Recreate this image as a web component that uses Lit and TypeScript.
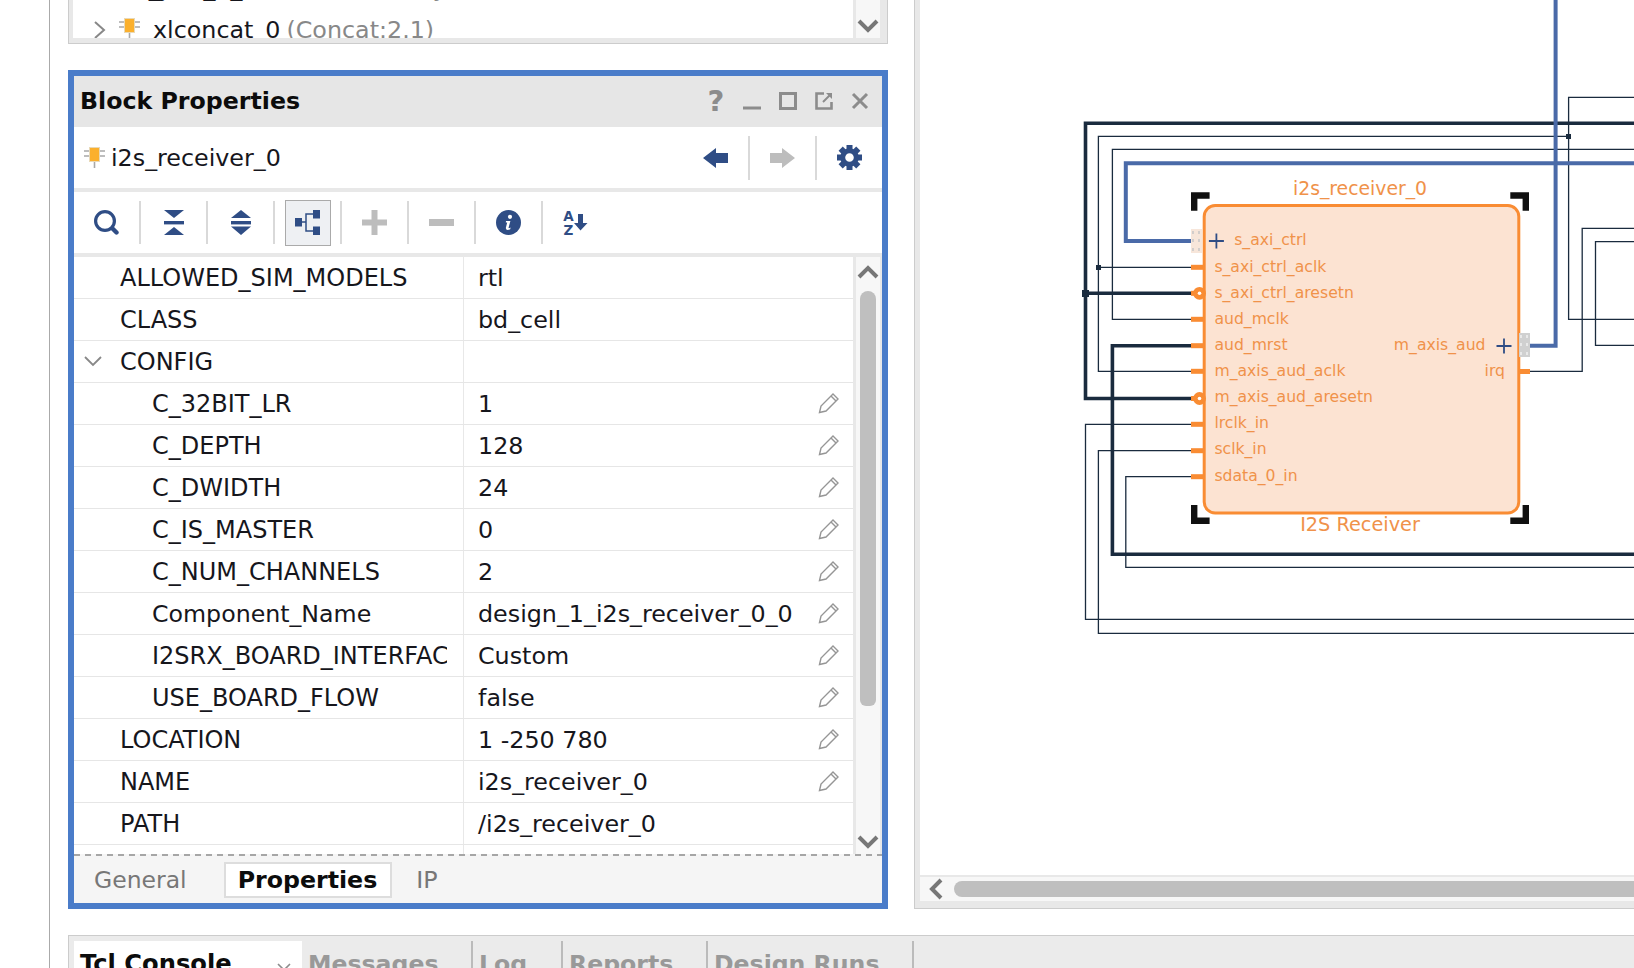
import { LitElement, html, svg, css } from "lit"
import { customElement } from "lit/decorators.js"

const NAVY = "#2f4d85"
const GREY = "#bdbdbd"

type Row = { name: string; value: string; child?: boolean; open?: boolean; edit?: boolean }

const rows: Row[] = [
    { name: "ALLOWED_SIM_MODELS", value: "rtl" },
    { name: "CLASS", value: "bd_cell" },
    { name: "CONFIG", value: "", open: true },
    { name: "C_32BIT_LR", value: "1", child: true, edit: true },
    { name: "C_DEPTH", value: "128", child: true, edit: true },
    { name: "C_DWIDTH", value: "24", child: true, edit: true },
    { name: "C_IS_MASTER", value: "0", child: true, edit: true },
    { name: "C_NUM_CHANNELS", value: "2", child: true, edit: true },
    { name: "Component_Name", value: "design_1_i2s_receiver_0_0", child: true, edit: true },
    { name: "I2SRX_BOARD_INTERFACE", value: "Custom", child: true, edit: true },
    { name: "USE_BOARD_FLOW", value: "false", child: true, edit: true },
    { name: "LOCATION", value: "1 -250 780", edit: true },
    { name: "NAME", value: "i2s_receiver_0", edit: true },
    { name: "PATH", value: "/i2s_receiver_0" },
]

// wires on the block design, in page coordinates
const thinWires = [
    "1191,267.3 1098.4,267.3",
    "1568.6,136.3 1098.4,136.3 1098.4,371.3 1191,371.3",
    "1640,149.3 1112.4,149.3 1112.4,319.3 1191,319.3",
    "1640,97.3 1568.6,97.3 1568.6,319.3 1640,319.3",
    "1530,371.3 1582.2,371.3 1582.2,228.3 1640,228.3",
    "1640,241.7 1595.5,241.7 1595.5,345.3 1640,345.3",
    "1191,424.3 1085.5,424.3 1085.5,619.3 1640,619.3",
    "1191,450.7 1098.4,450.7 1098.4,633.3 1640,633.3",
    "1191,476.7 1125.8,476.7 1125.8,567.3 1640,567.3",
]
const darkWires = [
    "1640,123.3 1085.5,123.3 1085.5,398.5 1191,398.5",
    "1085.5,293.3 1191,293.3",
    "1191,345.7 1112.4,345.7 1112.4,554.3 1640,554.3",
]
const blueWires = [
    "1640,163.3 1125.8,163.3 1125.8,241 1191,241",
    "1555.6,0 1555.6,345.7 1530,345.7",
]

const leftPins = [
    { label: "s_axi_ctrl_aclk", y: 267.3, base: 272 },
    { label: "s_axi_ctrl_aresetn", y: 293.3, base: 298, bubble: true },
    { label: "aud_mclk", y: 319.3, base: 324 },
    { label: "aud_mrst", y: 345.7, base: 350 },
    { label: "m_axis_aud_aclk", y: 371.3, base: 375.5 },
    { label: "m_axis_aud_aresetn", y: 398.5, base: 402, bubble: true },
    { label: "lrclk_in", y: 424.3, base: 428.4 },
    { label: "sclk_in", y: 450.7, base: 454 },
    { label: "sdata_0_in", y: 476.7, base: 480.8 },
]

const chip = () => html`<svg class="chip" width="21" height="21" viewBox="0 0 21 21">
    <path d="M0 4H6M0 9H6M15 4H21M15 9H21M10.5 15V21" stroke="#a8a8a8" stroke-width="1.6" fill="none" />
    <rect x="5.5" y="0.5" width="10" height="14" fill="#fbb02d" stroke="#e8d9b8" />
</svg>`

const pencil = () => html`<svg class="pencil" width="22" height="22" viewBox="0 0 22 22" fill="none" stroke="#969696" stroke-width="1.4">
    <path d="M1.5 20.5L3 14L15 2L20 7L8 19Z" />
    <path d="M13 4L18 9" />
</svg>`

const chevron = (dir: "up" | "down") => html`<svg class="chev" width="22" height="14" viewBox="0 0 22 14">
    <path d=${dir === "up" ? "M2 12L11 3L20 12" : "M2 2L11 11L20 2"} fill="none" stroke="#777" stroke-width="4" />
</svg>`

const tools = [
    html`<svg width="25" height="25" viewBox="0 0 25 25" fill="none" stroke=${NAVY}>
        <circle cx="11" cy="11" r="9.4" stroke-width="3.2" />
        <path d="M18.5 18.5L22.5 22.5" stroke-width="4.4" stroke-linecap="round" />
    </svg>`,
    html`<svg width="20" height="25" viewBox="0 0 20 25" fill=${NAVY}>
        <path d="M0 0H20L10 8ZM10 17L20 25H0Z" /><rect y="11" width="20" height="3.4" />
    </svg>`,
    html`<svg width="20" height="25" viewBox="0 0 20 25" fill=${NAVY}>
        <path d="M10 0L20 8H0ZM0 16.5H20L10 25Z" /><rect y="11" width="20" height="3.4" />
    </svg>`,
    html`<svg width="25" height="25" viewBox="0 0 25 25" fill=${NAVY}>
        <rect y="8" width="7" height="8.5" /><rect x="18" width="7" height="8.5" /><rect x="18" y="16.5" width="7" height="8.5" />
        <path d="M7 12H11M18 4H11V21H18" fill="none" stroke=${NAVY} stroke-width="1.5" />
    </svg>`,
    html`<svg width="25" height="25" viewBox="0 0 25 25" fill=${GREY}>
        <rect y="9.5" width="25" height="6" /><rect x="9.5" width="6" height="25" />
    </svg>`,
    html`<svg width="25" height="25" viewBox="0 0 25 25" fill=${GREY}><rect y="9" width="25" height="7" /></svg>`,
    html`<svg width="25" height="25" viewBox="0 0 25 25">
        <circle cx="12.5" cy="12.5" r="12.5" fill=${NAVY} />
        <circle cx="14" cy="6.8" r="2.1" fill="#fff" />
        <path d="M10 11H14.4L12.6 17.6Q12.4 18.8 14.6 17.6L14.2 19.2Q10 21 9.8 18L11.2 12.6L9.8 12.4Z" fill="#fff" />
    </svg>`,
    html`<svg width="25" height="25" viewBox="0 0 25 25">
        <text x="5.5" y="10.5" text-anchor="middle" class="az">A</text>
        <text x="5.5" y="24.5" text-anchor="middle" class="az">Z</text>
        <path d="M15 4H20V13H24.5L17.5 20.5L11 13H15Z" fill=${NAVY} />
    </svg>`,
]

const gear = html`<svg width="25" height="25" viewBox="0 0 25 25">
    ${[0, 45, 90, 135, 180, 225, 270, 315].map(
        (a) => svg`<rect x="9.5" y="0" width="6" height="6" fill=${NAVY} transform="rotate(${a} 12.5 12.5)" />`
    )}
    <circle cx="12.5" cy="12.5" r="6.8" fill="none" stroke=${NAVY} stroke-width="5" />
</svg>`

const corner = (d: string) => svg`<path d=${d} fill="none" stroke="#101010" stroke-width="6.4" />`

const busPort = (x: number, y: number, fill: string, dot: string) => svg`
    <rect x=${x} y=${y} width="11" height="24" fill=${fill} />
    <path d="M${x + 2} ${y + 2}v3M${x + 8} ${y + 2}v3M${x + 2} ${y + 10}v3M${x + 8} ${y + 10}v3M${x + 2} ${y + 19}v3M${x + 8} ${y + 19}v3"
        stroke=${dot} stroke-width="1.6" />`

const plus = (x: number, y: number) =>
    svg`<path d="M${x - 7.5} ${y}H${x + 7.5}M${x} ${y - 7.5}V${y + 7.5}" stroke=${NAVY} stroke-width="1.8" />`

@customElement("app-root")
export class AppRoot extends LitElement {
    static styles = css`
        :host {
            display: block;
            width: 1634px;
            height: 968px;
            overflow: hidden;
            background: #fff;
            font-family: "DejaVu Sans", sans-serif;
            font-size: 23.8px;
            color: #16161c;
        }
        svg {
            display: block;
            flex: none;
        }
        .page {
            display: flex;
            height: 968px;
        }
        .strip {
            width: 49px;
            flex: none;
            border-right: 1px solid #aaa;
        }
        .content {
            flex: 1;
            min-width: 0;
            display: flex;
            flex-direction: column;
        }
        .upper {
            height: 935px;
            flex: none;
            display: flex;
            padding-left: 18px;
        }
        .left {
            width: 820px;
            flex: none;
            display: flex;
            flex-direction: column;
            gap: 26px;
        }

        /* design hierarchy tail */
        .tree {
            height: 44px;
            box-sizing: border-box;
            display: flex;
            background: #e8e8e8;
            border: 1px solid #ccc;
            border-top: none;
            padding: 0 7px 5px 4px;
        }
        .tree-rows {
            flex: 1;
            background: #fff;
            overflow: hidden;
            display: flex;
            flex-direction: column;
            justify-content: flex-end;
        }
        .tree-row {
            height: 42px;
            flex: none;
            display: flex;
            align-items: center;
            white-space: nowrap;
            padding-left: 48px;
            gap: 6px;
            margin-bottom: -13px;
        }
        .tree-row + .tree-row {
            margin-top: 13px;
        }
        .tree-row .chev-r {
            margin: 0 6px 0 -28px;
        }
        .tree-row .chip {
            margin: -4px 7px 0 0;
        }
        .ip {
            color: #888;
        }
        .tree-bar {
            width: 24px;
            background: #f7f7f7;
            margin-left: 3px;
            display: flex;
            justify-content: center;
            align-items: flex-end;
            padding-bottom: 5px;
        }

        /* block properties window */
        .block {
            height: 839px;
            box-sizing: border-box;
            border: 6px solid #4a7cc9;
            display: flex;
            flex-direction: column;
        }
        .title {
            height: 51px;
            flex: none;
            box-sizing: border-box;
            background: #e6e6e6;
            display: flex;
            align-items: center;
            padding: 0 0 2px 6px;
            font-weight: 700;
            color: #0c0c0c;
            font-size: 23.7px;
        }
        .win-icons {
            margin-left: auto;
            display: flex;
            align-items: center;
        }
        .win-icon {
            width: 36px;
            height: 26px;
            display: flex;
            align-items: center;
            justify-content: center;
            color: #8c8c8c;
        }
        .win-icon.q {
            font-size: 29px;
        }
        .win-icon.last {
            margin-right: 4px;
        }
        .sub {
            height: 61px;
            flex: none;
            display: flex;
            align-items: center;
            padding-left: 10px;
            gap: 6px;
            border-bottom: 4px solid #e8e8e8;
        }
        .sub-tools {
            margin-left: auto;
            display: flex;
            align-items: center;
            height: 44px;
        }
        .sub-cell {
            width: 65px;
            display: flex;
            justify-content: center;
        }
        .sep {
            width: 2px;
            align-self: stretch;
            background: #d9d9d9;
            flex: none;
        }
        .toolbar {
            height: 61px;
            flex: none;
            display: flex;
            align-items: center;
            border-bottom: 4px solid #e8e8e8;
        }
        .tool-row {
            display: flex;
            height: 43px;
            align-items: center;
        }
        .tool {
            width: 65px;
            height: 43px;
            display: flex;
            align-items: center;
            justify-content: center;
        }
        .tool.active {
            height: 46px;
            width: 46px;
            margin: 0 9.5px;
            box-sizing: border-box;
            background: #eef0f3;
            border: 1px solid #aaa;
        }
        .az {
            font: 700 13.5px "DejaVu Sans", sans-serif;
            fill: #2f4d85;
        }

        /* property table */
        .body {
            flex: 1;
            min-height: 0;
            display: flex;
            background: #f7f7f7;
        }
        .table {
            width: 779px;
            flex: none;
            background: #fff;
            overflow: hidden;
            border-right: 3px solid #e8e8e8;
        }
        .row {
            height: 42px;
            box-sizing: border-box;
            display: flex;
            border-bottom: 1px solid #e6e6e6;
            align-items: stretch;
        }
        .name {
            width: 373px;
            flex: none;
            box-sizing: border-box;
            padding-left: 46px;
            white-space: nowrap;
            overflow: hidden;
            display: flex;
            align-items: center;
            align-self: stretch;
        }
        .name.child {
            padding-left: 78px;
        }
        .name.caps {
            font-size: 24px;
        }
        .name.mixed {
            font-size: 23.7px;
        }
        .name-cell {
            width: 389px;
            flex: none;
            border-right: 1px solid #e8e8e8;
            display: flex;
            align-items: center;
            position: relative;
        }
        .open {
            position: absolute;
            left: 10px;
            top: 15px;
        }
        .value {
            flex: 1;
            min-width: 0;
            display: flex;
            align-items: center;
            padding-left: 14px;
            white-space: nowrap;
        }
        .pencil {
            margin: -2px 13px 0 auto;
        }
        .row.tail {
            height: 20px;
        }
        .tail .name-cell {
            height: 20px;
        }
        .vbar {
            width: 24px;
            flex: none;
            display: flex;
            flex-direction: column;
            align-items: center;
            padding: 8px 0 5px;
            box-sizing: border-box;
        }
        .thumb {
            width: 16px;
            height: 415px;
            background: #bfbfbf;
            border-radius: 8px 8px 6px 6px;
            margin-top: 12px;
        }
        .vbar .chev:last-child {
            margin-top: auto;
        }
        .band {
            width: 2px;
            flex: none;
            background: #e8e8e8;
        }
        .tabs {
            height: 49px;
            flex: none;
            box-sizing: border-box;
            background-color: #f5f5f5;
            background-image: repeating-linear-gradient(90deg, #a6a6a6 0 6px, transparent 6px 11px);
            background-size: 100% 2px;
            background-repeat: no-repeat;
            display: flex;
            align-items: center;
            padding: 2px 0 0 20px;
            color: #777;
        }
        .tabs .gen {
            font-size: 23.5px;
        }
        .tabs .on {
            margin: 0 24px 0 37px;
            padding: 0 13px 0 12px;
            height: 36px;
            display: flex;
            align-items: center;
            background: #fff;
            border: 2px solid #ddd;
            box-sizing: border-box;
            font-weight: 700;
            color: #0c0c0c;
            font-size: 23.7px;
        }

        /* block design */
        .design {
            flex: 1;
            min-width: 0;
            margin-left: 26px;
            height: 909px;
            box-sizing: border-box;
            background: #e8e8e8;
            border-left: 1px solid #ccc;
            border-bottom: 1px solid #ccc;
            padding: 0 0 7px 5px;
            display: flex;
            flex-direction: column;
        }
        .canvas {
            flex: 1;
            min-height: 0;
            background: #fff;
            overflow: hidden;
        }
        .hbar {
            height: 24px;
            flex: none;
            margin-top: 2px;
            background: #f7f7f7;
            display: flex;
            align-items: center;
            padding-left: 8px;
            gap: 10px;
        }
        .hthumb {
            flex: 1;
            height: 16px;
            background: #bfbfbf;
            border-radius: 8px 0 0 8px;
            margin-right: -10px;
        }
        .pin-label {
            font: 15.65px "DejaVu Sans", sans-serif;
            fill: #f0924a;
        }
        .cell-label {
            font: 18.8px "DejaVu Sans", sans-serif;
            fill: #f0924a;
        }
        .type-label {
            font: 19.3px "DejaVu Sans", sans-serif;
            fill: #f0924a;
        }

        /* console tabs, cut off by the window */
        .bottom {
            flex: 1;
            min-height: 0;
            margin-left: 18px;
            background: #ebebeb;
            border-top: 1px solid #ccc;
            border-left: 1px solid #ccc;
            padding: 5px 0 0 5px;
            display: flex;
            overflow: hidden;
            font-weight: 700;
            font-size: 23.6px;
            color: #999;
        }
        .ctab {
            height: 40px;
            flex: none;
            box-sizing: border-box;
            padding: 9px 0 0 6px;
            border-right: 2px solid #bbb;
            white-space: nowrap;
        }
        .ctab.on {
            background: #fff;
            color: #0c0c0c;
            border-right: none;
            width: 228px;
            display: flex;
            font-size: 24.2px;
        }
        .ctab.on svg {
            margin: 13px 11px 0 auto;
        }
        .ctab.messages {
            width: 171px;
        }
        .ctab.log {
            width: 90px;
        }
        .ctab.reports {
            width: 145px;
        }
        .ctab.runs {
            width: 206px;
        }
    `

    render() {
        return html`
            <div class="page">
                <div class="strip"></div>
                <div class="content">
                    <div class="upper">
                        <div class="left">
                            ${this.renderTree()} ${this.renderBlock()}
                        </div>
                        ${this.renderDesign()}
                    </div>
                    <div class="bottom">
                        <div class="ctab on">
                            Tcl Console
                            <svg width="14" height="14" viewBox="0 0 14 14">
                                <path d="M1 1L13 13M13 1L1 13" stroke="#8c8c8c" stroke-width="1.6" />
                            </svg>
                        </div>
                        <div class="ctab messages">Messages</div>
                        <div class="ctab log">Log</div>
                        <div class="ctab reports">Reports</div>
                        <div class="ctab runs">Design Runs</div>
                    </div>
                </div>
            </div>
        `
    }

    renderTree() {
        return html`<div class="tree">
            <div class="tree-rows">
                <div class="tree-row">
                    <span>ila_jtck_0_0</span><span class="ip">(Concat Library</span>
                </div>
                <div class="tree-row">
                    <svg class="chev-r" width="14" height="20" viewBox="0 0 14 20">
                        <path d="M2 2L11 10L2 18" fill="none" stroke="#888" stroke-width="2" />
                    </svg>
                    ${chip()}
                    <span>xlconcat_0</span><span class="ip">(Concat:2.1)</span>
                </div>
            </div>
            <div class="tree-bar">${chevron("down")}</div>
        </div>`
    }

    renderBlock() {
        return html`<div class="block">
            <div class="title">
                Block Properties
                <div class="win-icons">
                    <div class="win-icon q">?</div>
                    <div class="win-icon">
                        <svg width="18" height="20" viewBox="0 0 18 20"><rect y="15.5" width="18" height="3" fill="#8c8c8c" /></svg>
                    </div>
                    <div class="win-icon">
                        <svg width="18" height="18" viewBox="0 0 18 18"><rect x="1.5" y="1.5" width="15" height="15" fill="none" stroke="#8c8c8c" stroke-width="3" /></svg>
                    </div>
                    <div class="win-icon">
                        <svg width="18" height="18" viewBox="0 0 18 18" fill="none" stroke="#8c8c8c">
                            <path d="M9 1.5H1.5V16.5H16.5V10" stroke-width="2.6" />
                            <path d="M8 10L15 3" stroke-width="2" />
                            <path d="M11 1H17V7Z" fill="#8c8c8c" stroke="none" />
                        </svg>
                    </div>
                    <div class="win-icon last">
                        <svg width="18" height="18" viewBox="0 0 18 18"><path d="M2 2L16 16M16 2L2 16" stroke="#8c8c8c" stroke-width="3" /></svg>
                    </div>
                </div>
            </div>
            <div class="sub">
                ${chip()}<span>i2s_receiver_0</span>
                <div class="sub-tools">
                    <div class="sub-cell">
                        <svg width="25" height="20" viewBox="0 0 25 20"><path d="M0 10L13 0V5H25V15H13V20Z" fill=${NAVY} /></svg>
                    </div>
                    <div class="sep"></div>
                    <div class="sub-cell">
                        <svg width="25" height="20" viewBox="0 0 25 20"><path d="M25 10L12 0V5H0V15H12V20Z" fill=${GREY} /></svg>
                    </div>
                    <div class="sep"></div>
                    <div class="sub-cell">${gear}</div>
                </div>
            </div>
            <div class="toolbar">
                <div class="tool-row">
                    ${tools.map(
                        (t, i) => html`
                            <div class="tool ${i === 3 ? "active" : ""}">${t}</div>
                            ${i < tools.length - 1 ? html`<div class="sep"></div>` : ""}
                        `
                    )}
                </div>
            </div>
            <div class="body">
                <div class="table">
                    ${rows.map(
                        (r) => html`<div class="row">
                            <div class="name-cell">
                                ${r.open
                                    ? html`<svg class="open" width="18" height="11" viewBox="0 0 18 11"><path d="M1 1L9 9L17 1" fill="none" stroke="#888" stroke-width="1.8" /></svg>`
                                    : ""}
                                <div class="name ${r.child ? "child" : ""} ${r.name === r.name.toUpperCase() ? "caps" : "mixed"}">${r.name}</div>
                            </div>
                            <div class="value">${r.value}${r.edit ? pencil() : ""}</div>
                        </div>`
                    )}
                    <div class="row tail"><div class="name-cell"></div></div>
                </div>
                <div class="vbar">
                    ${chevron("up")}
                    <div class="thumb"></div>
                    ${chevron("down")}
                </div>
                <div class="band"></div>
            </div>
            <div class="tabs">
                <span class="gen">General</span><span class="on">Properties</span><span>IP</span>
            </div>
        </div>`
    }

    renderDesign() {
        return html`<div class="design">
            <div class="canvas">
                <svg width="714" height="875" viewBox="920 0 714 875">
                    ${thinWires.map(
                        (p) => svg`<polyline points=${p} fill="none" stroke="#1a2b3e" stroke-width="1.3" />`
                    )}
                    ${darkWires.map(
                        (p) => svg`<polyline points=${p} fill="none" stroke="#1a2b3e" stroke-width="3.6" />`
                    )}
                    ${blueWires.map(
                        (p) => svg`<polyline points=${p} fill="none" stroke="#4a6aa8" stroke-width="4" />`
                    )}
                    <rect x="1096" y="265" width="5" height="5" fill="#1a2b3e" />
                    <rect x="1566" y="134" width="5" height="5" fill="#1a2b3e" />
                    <rect x="1082" y="290" width="7" height="7" fill="#1a2b3e" />

                    ${corner("M1194.2 210.7V195.5H1209.6")}
                    ${corner("M1510.3 195.5H1525.8V210.7")}
                    ${corner("M1194.2 505V520.8H1209.6")}
                    ${corner("M1510.3 520.8H1525.8V505")}

                    <rect x="1204.2" y="205.5" width="314.6" height="307.5" rx="11" fill="#fce3d2" stroke="#f98c33" stroke-width="3" />

                    ${busPort(1191, 229, "#f7e6da", "#c8c8c8")}
                    ${busPort(1519, 333, "#d0d0d0", "#efefef")}
                    ${plus(1216.4, 241)} ${plus(1504, 346)}

                    ${leftPins.map(
                        (p) => svg`
                            ${p.bubble
                                ? svg`<rect x="1191" y=${p.y - 2.5} width="6" height="5" fill="#f98c33" />
                                      <circle cx="1199.5" cy=${p.y} r="6.4" fill="#f98c33" />
                                      <circle cx="1199.5" cy=${p.y} r="1.8" fill="#fff" />`
                                : svg`<rect x="1191" y=${p.y - 2.5} width="13" height="5" fill="#f98c33" />`}
                            <text class="pin-label" x="1214.4" y=${p.base}>${p.label}</text>
                        `
                    )}
                    <rect x="1518" y="369" width="12" height="5" fill="#f98c33" />

                    <text class="pin-label" x="1234.2" y="245">s_axi_ctrl</text>
                    <text class="pin-label" x="1485.5" y="350" text-anchor="end">m_axis_aud</text>
                    <text class="pin-label" x="1505" y="375.5" text-anchor="end">irq</text>
                    <text class="cell-label" x="1360" y="195" text-anchor="middle">i2s_receiver_0</text>
                    <text class="type-label" x="1360" y="531" text-anchor="middle">I2S Receiver</text>
                </svg>
            </div>
            <div class="hbar">
                <svg width="16" height="22" viewBox="0 0 16 22"><path d="M13 2L4 11L13 20" fill="none" stroke="#777" stroke-width="4" /></svg>
                <div class="hthumb"></div>
            </div>
        </div>`
    }
}
